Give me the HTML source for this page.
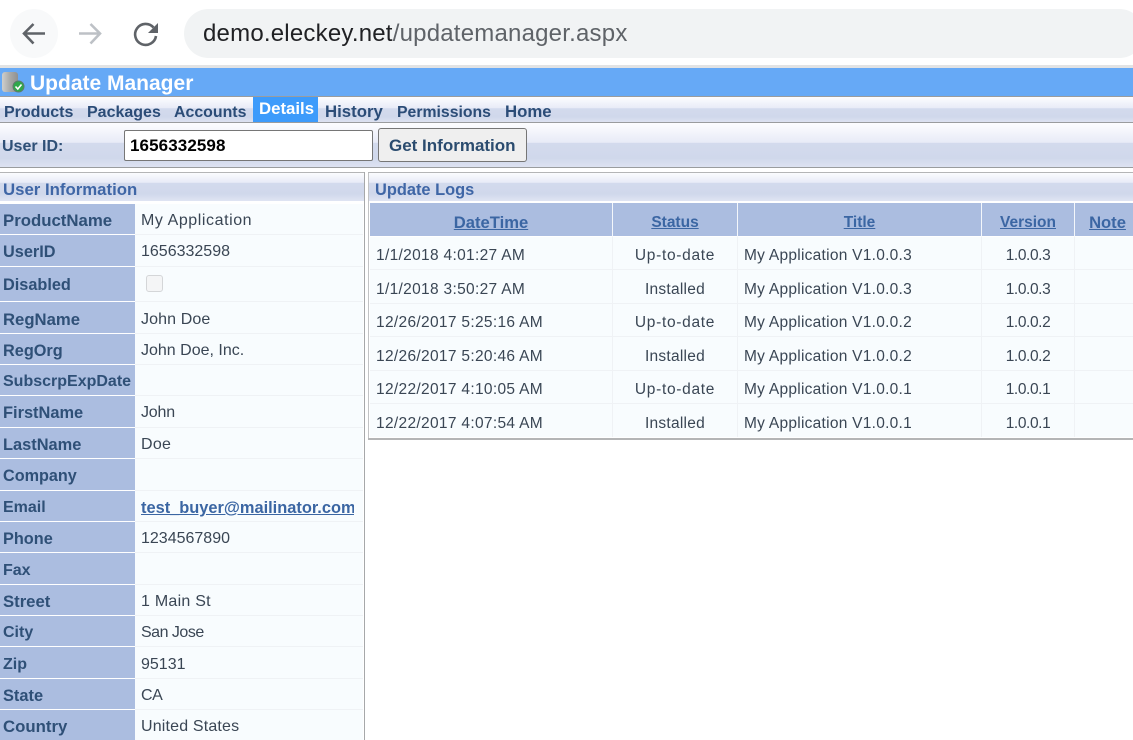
<!DOCTYPE html>
<html><head><meta charset="utf-8"><title>Update Manager</title>
<style>
html,body{margin:0;padding:0;background:#fff;width:1133px;height:740px;overflow:hidden}
body{position:relative;font-family:"Liberation Sans",sans-serif;font-size:16px;color:#3a4654}
div,a,span.t{position:absolute;white-space:nowrap}
.g{background:linear-gradient(#fdfdff 0%,#e8ebf7 44%,#d3daed 46%,#d0d8eb 80%,#dde2f1 100%)}
.gp{background:linear-gradient(#fbfcfe 0%,#e8ebf7 34%,#d3daed 36%,#d0d8eb 75%,#dfe4f2 100%)}
.tab{top:102px;height:22px;line-height:22px;font-weight:bold;color:#2b4c77;font-size:16px}
.l{left:0;width:135px;background:#abbde0}
.v{left:135px;width:228px;background:#f8fcfe;border-bottom:0}
.k{left:3px;margin-top:1px;font-weight:bold;color:#2f5077;font-size:16px;height:22px;line-height:22px}
.x{left:141px;margin-top:1px;color:#3a4654;font-size:16px;height:22px;line-height:22px}
.h{top:212px;height:22px;line-height:22px;font-weight:bold;color:#3b66a3;text-decoration:underline;font-size:15.5px;text-align:center}
.c{height:22px;line-height:22px;font-size:15.5px;color:#3a4654;margin-top:2px}
.cc{text-align:center}
.d{letter-spacing:.32px}
.a{letter-spacing:.26px}
.u{letter-spacing:.7px}
.i{letter-spacing:.25px}
.n{letter-spacing:-.4px}
.sep{background:#eff2f5;height:1px}
.vs{background:#eff2f5;width:1px;top:237px;height:200px}
.hs{background:#f4f7fb;width:1px;top:203px;height:34px}
.rs{left:135px;width:228px;height:1px;background:#eff2f5}
</style></head><body>

<!-- browser bar -->
<div style="left:10px;top:9px;width:48px;height:49px;border-radius:50%;background:#f8f9fa"></div>
<svg style="position:absolute;left:0;top:0" width="180" height="66" fill="none">
<path d="M45 33.500H24.500M33.500 24L24 33.500L33.500 43.500" stroke="#5f6368" stroke-width="2.600"/>
<path d="M79 33.500H100M90.500 24L100 33.500L90.500 43.500" stroke="#bdc1c6" stroke-width="2.600"/>
<path d="M153.500 27.500A10.500 10.500 0 1 0 156 36" stroke="#5f6368" stroke-width="2.600"/>
<path d="M158 23V33H148Z" fill="#5f6368"/>
</svg>
<div style="left:184px;top:9px;width:960px;height:49px;border-radius:25px;background:#f1f3f4"></div>
<div style="left:203px;top:17px;height:34px;line-height:34px;font-size:24px;color:#202124;letter-spacing:.21px">demo.eleckey.net<span style="color:#5f6368">/updatemanager.aspx</span></div>
<div style="left:0;top:65px;width:1133px;height:3px;background:#e2e3e4"></div>

<!-- title -->
<div style="left:0;top:68px;width:1133px;height:28px;background:#66a9f6"></div>
<svg style="position:absolute;left:2px;top:71px" width="24" height="23">
<defs><linearGradient id="cy" x1="0" x2="1" y1="0" y2="0"><stop offset="0" stop-color="#cfcfcd"/><stop offset=".5" stop-color="#a8a9a8"/><stop offset="1" stop-color="#8f9090"/></linearGradient></defs>
<rect x="0" y="1" width="16" height="20" rx="3" fill="url(#cy)"/>
<circle cx="16.500" cy="15.500" r="5.500" fill="#2fa84a" stroke="#5c7c6c"/>
<path d="M13.500 15.500L15.800 18L19.500 13.500" stroke="#fff" stroke-width="1.600" fill="none"/>
</svg>
<div style="left:30px;top:71px;height:26px;line-height:26px;font-size:21px;font-weight:bold;color:#fff">Update Manager</div>
<div style="left:0;top:96px;width:1133px;height:1px;background:#9a9c9e"></div>

<!-- tabs -->
<div class="g" style="left:0;top:97px;width:1133px;height:25px"></div>
<div style="left:0;top:122px;width:1133px;height:1px;background:#9a9c9e"></div>
<div class="tab" style="left:4px">Products</div>
<div class="tab" style="left:87px;font-size:16px">Packages</div>
<div class="tab" style="left:174px;font-size:15.900px">Accounts</div>
<div style="left:253px;top:97px;width:65px;height:25px;background:#3d9bfb"></div>
<div class="tab" style="left:259px;top:98px;color:#fff;font-size:16.800px">Details</div>
<div class="tab" style="left:325px;top:101px;font-size:16.800px">History</div>
<div class="tab" style="left:397px;font-size:15.800px">Permissions</div>
<div class="tab" style="left:505px;top:101px;font-size:16.800px">Home</div>

<!-- toolbar -->
<div class="g" style="left:0;top:123px;width:1133px;height:44px"></div>
<div style="left:0;top:167px;width:1133px;height:1px;background:#9a9c9e"></div>
<div class="k" style="left:2px;top:135px">User ID:</div>
<div style="left:124px;top:130px;width:247px;height:29px;background:#fff;border:1px solid #767676;border-radius:2px"></div>
<div style="left:130px;top:135px;height:22px;line-height:22px;font-weight:bold;color:#000;font-size:17px;letter-spacing:.1px">1656332598</div>
<div style="left:378px;top:128px;width:147px;height:32px;background:#efefef;border:1px solid #767676;border-radius:3px"></div>
<div style="left:389px;top:135px;height:22px;line-height:22px;font-weight:bold;color:#2b4c6f;font-size:17px">Get Information</div>

<!-- panels -->
<div style="left:0;top:172px;width:364px;height:1px;background:#b4b5b6"></div>
<div class="gp" style="left:0;top:173px;width:364px;height:28px"></div>
<div style="left:364px;top:172px;width:1px;height:568px;background:#a6a8aa"></div>
<div style="left:368px;top:172px;width:1px;height:266px;background:#c2c3c5"></div>
<div style="left:368px;top:172px;width:765px;height:1px;background:#b4b5b6"></div>
<div class="gp" style="left:369px;top:173px;width:764px;height:28px"></div>
<div style="left:3px;top:179px;height:22px;line-height:22px;font-weight:bold;color:#3f66a6;font-size:16.800px">User Information</div>
<div style="left:375px;top:179px;height:22px;line-height:22px;font-weight:bold;color:#3f66a6;font-size:16.400px">Update Logs</div>

<!-- left table -->
<div class="l" style="top:204px;height:30px"></div><div class="v" style="top:204px;height:30px"></div>
<div class="l" style="top:235px;height:31px"></div><div class="v" style="top:235px;height:31px"></div>
<div class="l" style="top:267px;height:34px"></div><div class="v" style="top:267px;height:34px"></div>
<div class="l" style="top:302px;height:31px"></div><div class="v" style="top:302px;height:31px"></div>
<div class="l" style="top:334px;height:30px"></div><div class="v" style="top:334px;height:30px"></div>
<div class="l" style="top:365px;height:30px"></div><div class="v" style="top:365px;height:30px"></div>
<div class="l" style="top:396px;height:31px"></div><div class="v" style="top:396px;height:31px"></div>
<div class="l" style="top:428px;height:30px"></div><div class="v" style="top:428px;height:30px"></div>
<div class="l" style="top:459px;height:31px"></div><div class="v" style="top:459px;height:31px"></div>
<div class="l" style="top:491px;height:30px"></div><div class="v" style="top:491px;height:30px"></div>
<div class="l" style="top:522px;height:30px"></div><div class="v" style="top:522px;height:30px"></div>
<div class="l" style="top:553px;height:31px"></div><div class="v" style="top:553px;height:31px"></div>
<div class="l" style="top:585px;height:30px"></div><div class="v" style="top:585px;height:30px"></div>
<div class="l" style="top:616px;height:30px"></div><div class="v" style="top:616px;height:30px"></div>
<div class="l" style="top:647px;height:31px"></div><div class="v" style="top:647px;height:31px"></div>
<div class="l" style="top:679px;height:30px"></div><div class="v" style="top:679px;height:30px"></div>
<div class="l" style="top:710px;height:30px"></div><div class="v" style="top:710px;height:30px"></div>
<div class="rs" style="top:234px"></div>
<div class="rs" style="top:266px"></div>
<div class="rs" style="top:301px"></div>
<div class="rs" style="top:333px"></div>
<div class="rs" style="top:364px"></div>
<div class="rs" style="top:395px"></div>
<div class="rs" style="top:427px"></div>
<div class="rs" style="top:458px"></div>
<div class="rs" style="top:490px"></div>
<div class="rs" style="top:521px"></div>
<div class="rs" style="top:552px"></div>
<div class="rs" style="top:584px"></div>
<div class="rs" style="top:615px"></div>
<div class="rs" style="top:646px"></div>
<div class="rs" style="top:678px"></div>
<div class="rs" style="top:709px"></div>

<div class="k" style="top:209px;font-size:16.800px">ProductName</div><div class="x" style="top:209px;letter-spacing:.57px">My Application</div>
<div class="k" style="top:240px;font-size:16.300px">UserID</div><div class="x" style="top:240px">1656332598</div>
<div class="k" style="top:273px;font-size:16.300px">Disabled</div>
<div style="left:146px;top:275px;width:15px;height:15px;background:#f4f5f6;border:1px solid #d4d6d8;border-radius:3px"></div>
<div class="k" style="top:308px;font-size:16.700px">RegName</div><div class="x" style="top:308px;letter-spacing:.12px">John Doe</div>
<div class="k" style="top:339px;font-size:16.300px">RegOrg</div><div class="x" style="top:339px">John Doe, Inc.</div>
<div class="k" style="top:370px">SubscrpExpDate</div>
<div class="k" style="top:401px;font-size:16.400px">FirstName</div><div class="x" style="top:401px;letter-spacing:-.2px">John</div>
<div class="k" style="top:433px;font-size:16.400px">LastName</div><div class="x" style="top:433px;letter-spacing:.3px">Doe</div>
<div class="k" style="top:464px;font-size:16.200px">Company</div>
<div class="k" style="top:496px">Email</div>
<div style="left:141px;top:497px;width:213px;height:22px;line-height:22px;overflow:hidden;font-weight:bold;color:#3b66a3;text-decoration:underline;font-size:16.400px">test_buyer@mailinator.com</div>
<div class="k" style="top:527px;font-size:16.300px">Phone</div><div class="x" style="top:527px">1234567890</div>
<div class="k" style="top:559px">Fax</div>
<div class="k" style="top:590px;font-size:16.700px">Street</div><div class="x" style="top:590px;letter-spacing:.25px">1 Main St</div>
<div class="k" style="top:621px">City</div><div class="x" style="top:621px;letter-spacing:-.5px">San Jose</div>
<div class="k" style="top:653px">Zip</div><div class="x" style="top:653px">95131</div>
<div class="k" style="top:684px;font-size:16.400px">State</div><div class="x" style="top:684px;letter-spacing:-.4px">CA</div>
<div class="k" style="top:715px;font-size:16.800px">Country</div><div class="x" style="top:715px;letter-spacing:.17px">United States</div>

<!-- right table -->
<div style="left:370px;top:203px;width:763px;height:33px;background:#abbde0"></div>
<div style="left:370px;top:237px;width:763px;height:200px;background:#f8fcfe"></div>
<div class="hs" style="left:612px"></div><div class="hs" style="left:737px"></div><div class="hs" style="left:981px"></div><div class="hs" style="left:1074px"></div>
<div class="vs" style="left:612px"></div><div class="vs" style="left:737px"></div><div class="vs" style="left:981px"></div><div class="vs" style="left:1074px"></div>
<div class="sep" style="left:370px;top:269px;width:763px"></div>
<div class="sep" style="left:370px;top:303px;width:763px"></div>
<div class="sep" style="left:370px;top:336px;width:763px"></div>
<div class="sep" style="left:370px;top:370px;width:763px"></div>
<div class="sep" style="left:370px;top:403px;width:763px"></div>
<div style="left:368px;top:438px;width:765px;height:2px;background:#b4b5b6"></div>

<div class="h" style="left:370px;width:242px;font-size:16.600px">DateTime</div>
<div class="h" style="left:613px;width:124px">Status</div>
<div class="h" style="left:738px;width:243px">Title</div>
<div class="h" style="left:982px;width:92px">Version</div>
<div class="h" style="left:1075px;width:65px;font-size:16.600px">Note</div>

<div class="c d" style="left:376px;top:243px">1/1/2018 4:01:27 AM</div><div class="c cc u" style="left:613px;width:124px;top:243px">Up-to-date</div><div class="c a" style="left:744px;top:243px">My Application V1.0.0.3</div><div class="c cc n" style="left:982px;width:92px;top:243px">1.0.0.3</div>
<div class="c d" style="left:376px;top:277px">1/1/2018 3:50:27 AM</div><div class="c cc i" style="left:613px;width:124px;top:277px">Installed</div><div class="c a" style="left:744px;top:277px">My Application V1.0.0.3</div><div class="c cc n" style="left:982px;width:92px;top:277px">1.0.0.3</div>
<div class="c d" style="left:376px;top:310px">12/26/2017 5:25:16 AM</div><div class="c cc u" style="left:613px;width:124px;top:310px">Up-to-date</div><div class="c a" style="left:744px;top:310px">My Application V1.0.0.2</div><div class="c cc n" style="left:982px;width:92px;top:310px">1.0.0.2</div>
<div class="c d" style="left:376px;top:344px">12/26/2017 5:20:46 AM</div><div class="c cc i" style="left:613px;width:124px;top:344px">Installed</div><div class="c a" style="left:744px;top:344px">My Application V1.0.0.2</div><div class="c cc n" style="left:982px;width:92px;top:344px">1.0.0.2</div>
<div class="c d" style="left:376px;top:377px">12/22/2017 4:10:05 AM</div><div class="c cc u" style="left:613px;width:124px;top:377px">Up-to-date</div><div class="c a" style="left:744px;top:377px">My Application V1.0.0.1</div><div class="c cc n" style="left:982px;width:92px;top:377px">1.0.0.1</div>
<div class="c d" style="left:376px;top:411px">12/22/2017 4:07:54 AM</div><div class="c cc i" style="left:613px;width:124px;top:411px">Installed</div><div class="c a" style="left:744px;top:411px">My Application V1.0.0.1</div><div class="c cc n" style="left:982px;width:92px;top:411px">1.0.0.1</div>
</body></html>
